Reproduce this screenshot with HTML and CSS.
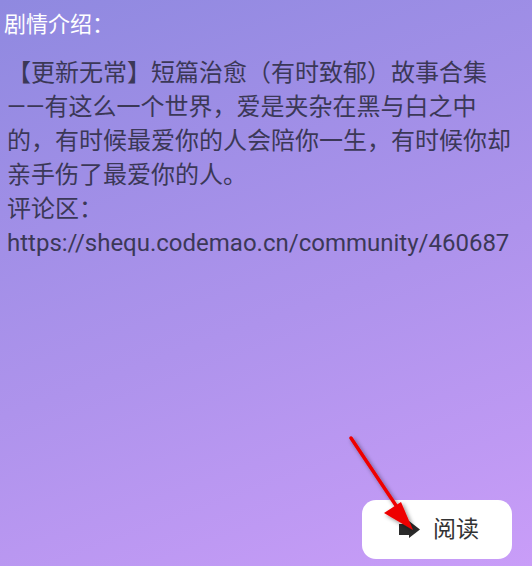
FILE: index.html
```html
<!DOCTYPE html>
<html lang="zh-CN">
<head>
    <meta charset="UTF-8">
    <meta name="viewport" content="width=device-width, initial-scale=1.0">
    <title>剧情介绍</title>
    <link rel="stylesheet" href="styles.css">
</head>
<body>
    <div class="page">
        <h1 class="title">剧情介绍：</h1>
        <p class="intro">【更新无常】短篇治愈（有时致郁）故事合集——有这么一个世界，爱是夹杂在黑与白之中的，有时候最爱你的人会陪你一生，有时候你却亲手伤了最爱你的人。<br>评论区：<br>https://shequ.codemao.cn/community/460687</p>

        <button class="read-btn">
            <svg class="read-icon" width="21" height="17" viewBox="0 0 21 17"><polygon points="0,3 10,3 10,0 21,8.5 10,17 10,14 0,14" fill="#2b2b2b"/></svg>
            <span>阅读</span>
        </button>
    </div>

    <!-- annotation arrow pointing at the button -->
    <svg class="pointer" width="532" height="566" viewBox="0 0 532 566">
        <defs>
            <filter id="shadow" x="-20%" y="-20%" width="140%" height="140%">
                <feDropShadow dx="2" dy="2" stdDeviation="2" flood-color="#000" flood-opacity="0.45"/>
            </filter>
        </defs>
        <g filter="url(#shadow)">
            <line x1="351" y1="438" x2="403" y2="516" stroke="#ee0000" stroke-width="3.5" stroke-linecap="round"/>
            <polygon points="413,530 384,513 401,502" fill="#ee0000"/>
        </g>
    </svg>
</body>
</html>
```

FILE: styles.css
```css
html, body { margin: 0; padding: 0; }
body {
    font-family: Roboto, "Noto Sans CJK SC", sans-serif;
    background: linear-gradient(160deg, #8f89e0 0%, #ae93ec 55%, #c99df8 100%);
    min-height: 566px;
    overflow: hidden;
}
.page { display: flex; flex-direction: column; min-height: 566px; padding: 0 20px 7px 7px; box-sizing: border-box; }
.title { font-size: 22px; font-weight: 400; color: #fff; margin: 10px 0 0 -3px; line-height: 30px; }
.intro { font-size: 24px; line-height: 34px; color: #3b3857; margin: 16px 0 0; }
.read-btn {
    margin-top: auto;
    align-self: flex-end;
    width: 150px; height: 59px;
    background: #fff; border: none; border-radius: 14px;
    display: flex; align-items: center; justify-content: center; gap: 13px;
    font-family: "Noto Sans CJK SC", sans-serif; font-size: 23px; color: #333;
    padding: 0 0 5px 4px;
}
.read-icon { margin-top: 4px; }
.pointer { position: absolute; left: 0; top: 0; pointer-events: none; }
```
